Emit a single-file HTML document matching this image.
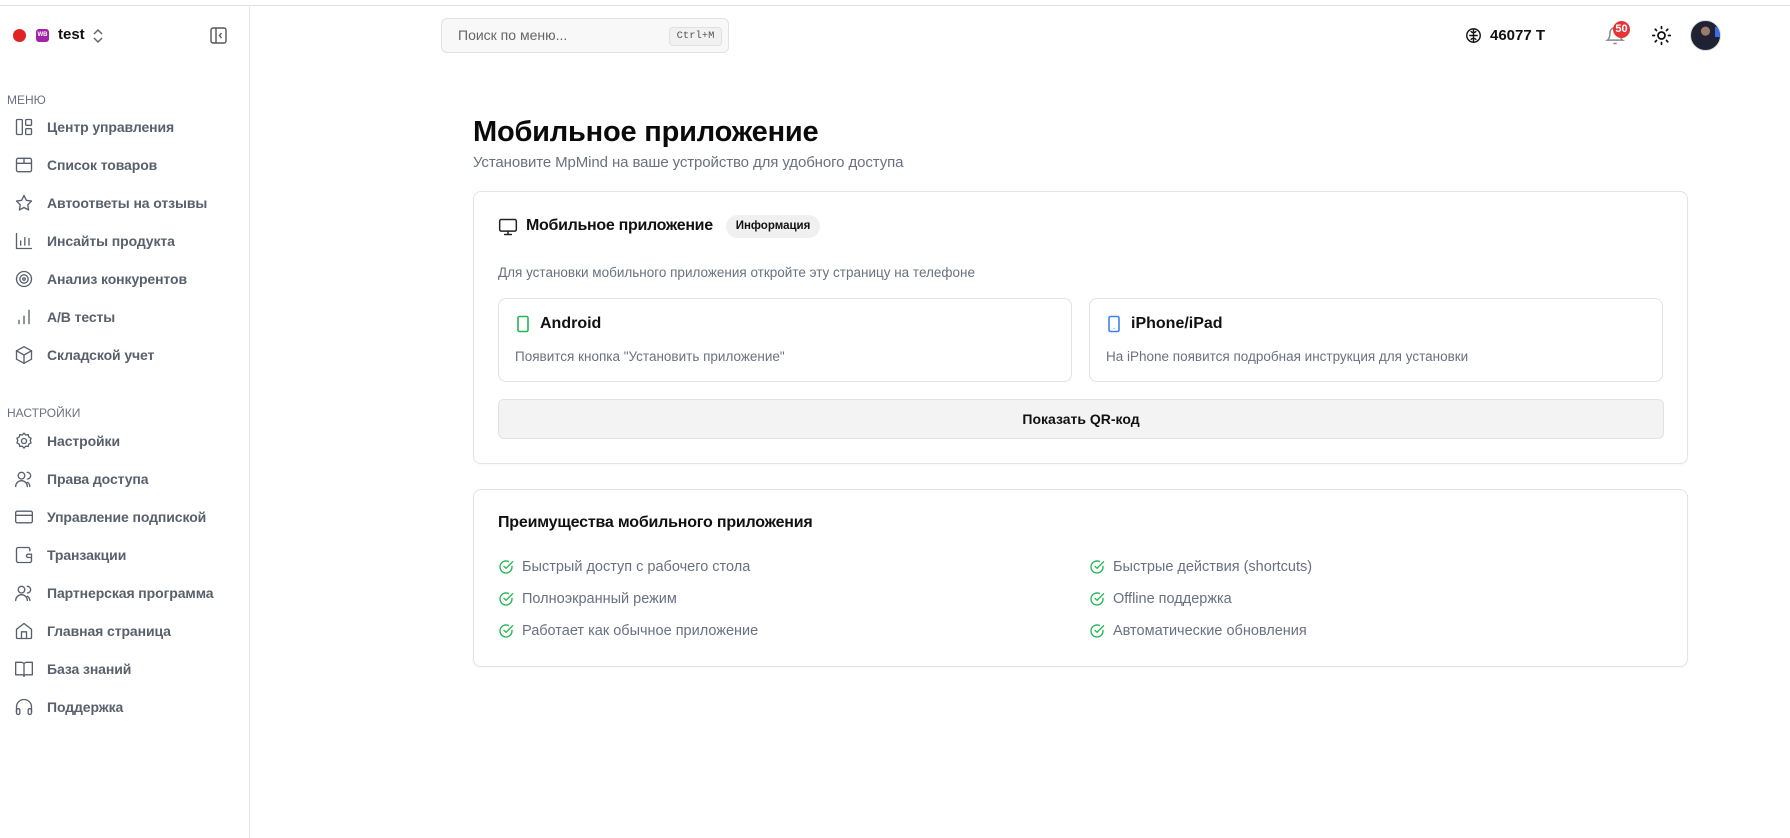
<!DOCTYPE html>
<html><head><meta charset="utf-8"><style>
*{box-sizing:border-box;margin:0;padding:0}
body{width:1790px;height:838px;overflow:hidden;background:#fff;font-family:"Liberation Sans","Noto Sans CJK SC",sans-serif;color:#111;position:relative}
.topline{position:absolute;left:0;top:5px;width:1790px;height:1px;background:#e2e2e2}
.side{position:absolute;left:0;top:5px;width:250px;height:833px;border-right:1px solid #e6e6e6}
.abs{position:absolute}
.sec{position:absolute;left:7px;font-size:12px;color:#6b7080}
.it{position:absolute;left:14px;height:24px;display:flex;align-items:center;font-size:14px;font-weight:600;color:#5a5f6c;letter-spacing:-0.1px}
.it svg{width:20px;height:20px;margin-right:13px;stroke:#5a5f6c;fill:none;stroke-width:1.6;stroke-linecap:round;stroke-linejoin:round}
.card{position:absolute;left:473px;width:1215px;border:1px solid #e3e3e3;border-radius:8px;box-shadow:0 1px 2px rgba(0,0,0,.04)}
.box{position:absolute;top:298px;width:574px;height:84px;border:1px solid #e3e3e3;border-radius:8px}
.box .h{position:absolute;left:16px;top:16px;font-size:16px;font-weight:600;display:flex;align-items:center}
.box .s{position:absolute;left:16px;top:50px;font-size:13.5px;color:#6b7080}
.li{position:absolute;display:flex;align-items:center;font-size:14.5px;color:#6b7080}
.li svg{width:16px;height:16px;margin-right:8px;stroke:#22b455;fill:none;stroke-width:2;stroke-linecap:round;stroke-linejoin:round}
</style></head><body>
<div class="topline"></div>
<div class="side"></div>
<div class="abs" style="left:13px;top:29px;width:13px;height:13px;border-radius:50%;background:#e02424"></div>
<div class="abs" style="left:36px;top:29px;width:13px;height:13px;border-radius:3px;background:#a322a8;color:#fff;font-size:6px;line-height:13px;text-align:center;font-weight:700">WB</div>
<div class="abs" style="left:58px;top:26px;font-size:15px;font-weight:700">test</div>
<svg class="abs" style="left:91px;top:27px" width="14" height="18" viewBox="0 0 14 18" fill="none" stroke="#666" stroke-width="1.5"><path d="M3 7l4-4 4 4M3 11l4 4 4-4"/></svg>
<svg class="abs" style="left:210px;top:27px" width="17" height="17" viewBox="0 0 17 17" fill="none" stroke="#555" stroke-width="1.4"><rect x="1" y="1" width="15" height="15" rx="2"/><path d="M6 1v15M11.5 6l-2 2.5 2 2.5"/></svg>

<div class="sec" style="top:93px">МЕНЮ</div>
<div class="it" style="top:115px"><svg viewBox="0 0 24 24"><rect x="3" y="3" width="7" height="18" rx="1"/><rect x="14" y="3" width="7" height="7" rx="1"/><rect x="14" y="14" width="7" height="7" rx="1"/></svg>Центр управления</div>
<div class="it" style="top:153px"><svg viewBox="0 0 24 24"><rect x="3" y="4" width="18" height="16" rx="2"/><path d="M3 10h18M12 4v6"/></svg>Список товаров</div>
<div class="it" style="top:191px"><svg viewBox="0 0 24 24"><path d="M12 3l2.8 5.8 6.2.9-4.5 4.4 1 6.2L12 17.4 6.5 20.3l1-6.2L3 9.7l6.2-.9z"/></svg>Автоответы на отзывы</div>
<div class="it" style="top:229px"><svg viewBox="0 0 24 24"><path d="M3 3v18h18M8 17v-5M13 17V8M18 17v-8"/></svg>Инсайты продукта</div>
<div class="it" style="top:267px"><svg viewBox="0 0 24 24"><circle cx="12" cy="12" r="9"/><circle cx="12" cy="12" r="5"/><circle cx="12" cy="12" r="1.5"/></svg>Анализ конкурентов</div>
<div class="it" style="top:305px"><svg viewBox="0 0 24 24"><path d="M6 20v-4M12 20v-9M18 20V4"/></svg>A/B тесты</div>
<div class="it" style="top:343px"><svg viewBox="0 0 24 24"><path d="M12 2l9 5v10l-9 5-9-5V7z"/><path d="M3 7l9 5 9-5M12 12v10"/></svg>Складской учет</div>

<div class="sec" style="top:406px">НАСТРОЙКИ</div>
<div class="it" style="top:429px"><svg viewBox="0 0 24 24"><circle cx="12" cy="12" r="3"/><path d="M12 2.5l2 2.3 3-.4.8 2.9 2.7 1.4-1 2.8 1 2.8-2.7 1.4-.8 2.9-3-.4-2 2.3-2-2.3-3 .4-.8-2.9-2.7-1.4 1-2.8-1-2.8 2.7-1.4.8-2.9 3 .4z"/></svg>Настройки</div>
<div class="it" style="top:467px"><svg viewBox="0 0 24 24"><circle cx="9" cy="8" r="4"/><path d="M2 21a7 7 0 0114 0M16 4a4 4 0 010 8M19 21a6 6 0 00-3-5"/></svg>Права доступа</div>
<div class="it" style="top:505px"><svg viewBox="0 0 24 24"><rect x="2" y="5" width="20" height="14" rx="2"/><path d="M2 10h20"/></svg>Управление подпиской</div>
<div class="it" style="top:543px"><svg viewBox="0 0 24 24"><path d="M19 7V5a2 2 0 00-2-2H5a2 2 0 00-2 2v14a2 2 0 002 2h14a2 2 0 002-2v-3"/><path d="M21 11h-4a2 2 0 000 4h4z"/></svg>Транзакции</div>
<div class="it" style="top:581px"><svg viewBox="0 0 24 24"><circle cx="9" cy="8" r="4"/><path d="M2 21a7 7 0 0114 0M16 4a4 4 0 010 8M19 21a6 6 0 00-3-5"/></svg>Партнерская программа</div>
<div class="it" style="top:619px"><svg viewBox="0 0 24 24"><path d="M3 10l9-7 9 7v10a1 1 0 01-1 1H4a1 1 0 01-1-1z"/><path d="M9 21v-8h6v8"/></svg>Главная страница</div>
<div class="it" style="top:657px"><svg viewBox="0 0 24 24"><path d="M2 4h7a3 3 0 013 3v14a2 2 0 00-2-2H2zM22 4h-7a3 3 0 00-3 3v14a2 2 0 012-2h8z"/></svg>База знаний</div>
<div class="it" style="top:695px"><svg viewBox="0 0 24 24"><path d="M3 18v-6a9 9 0 0118 0v6"/><rect x="3" y="14" width="4" height="7" rx="2"/><rect x="17" y="14" width="4" height="7" rx="2"/></svg>Поддержка</div>

<div class="abs" style="left:441px;top:18px;width:288px;height:35px;border:1px solid #e2e2e2;border-radius:6px;background:#f8f8f8"></div>
<div class="abs" style="left:458px;top:27px;font-size:14px;color:#666">Поиск по меню...</div>
<div class="abs" style="left:669px;top:27px;width:53px;height:19px;border:1px solid #e0e0e0;border-radius:4px;background:#f1f1f1;font-family:'Liberation Mono',monospace;font-size:10.5px;color:#555;text-align:center;line-height:17px">Ctrl+M</div>

<svg class="abs" style="left:1465px;top:27px" width="17" height="17" viewBox="0 0 24 24" fill="none" stroke="#111" stroke-width="2"><circle cx="12" cy="12" r="9.5"/><path d="M12 3v18M12 8c-2 0-3-1-4-2M12 12H6M12 16c-2 0-3 1-4 2M12 8c2 0 3-1 4-2M12 12h6M12 16c2 0 3 1 4 2"/></svg>
<div class="abs" style="left:1490px;top:27px;font-size:15px;font-weight:700">46077 T</div>
<svg class="abs" style="left:1605px;top:26px" width="20" height="20" viewBox="0 0 24 24" fill="none" stroke="#888" stroke-width="1.8"><path d="M6 8a6 6 0 0112 0c0 7 3 9 3 9H3s3-2 3-9M10 21h4"/></svg>
<div class="abs" style="left:1613px;top:21px;width:17px;height:17px;border-radius:50%;background:#e53535;color:#fff;font-size:11px;font-weight:700;text-align:center;line-height:17px">50</div>
<svg class="abs" style="left:1651px;top:25px" width="21" height="21" viewBox="0 0 24 24" fill="none" stroke="#111" stroke-width="2" stroke-linecap="round"><circle cx="12" cy="12" r="4"/><path d="M12 2v2M12 20v2M4.9 4.9l1.4 1.4M17.7 17.7l1.4 1.4M2 12h2M20 12h2M4.9 19.1l1.4-1.4M17.7 6.3l1.4-1.4"/></svg>
<div class="abs" style="left:1690px;top:20px;width:31px;height:31px;border-radius:50%;background:radial-gradient(circle at 50% 35%,#9a7a6a 0 18%,#1e2233 20%);border:1px solid #ddd;overflow:hidden"><div style="position:absolute;right:0;top:6px;width:5px;height:10px;background:#3a6ee8"></div></div>

<div class="abs" style="left:473px;top:116px;font-size:29px;font-weight:700;color:#0a0a0a;letter-spacing:-0.2px">Мобильное приложение</div>
<div class="abs" style="left:473px;top:154px;font-size:15px;color:#6b7080;letter-spacing:-0.1px">Установите MpMind на ваше устройство для удобного доступа</div>

<div class="card" style="top:191px;height:273px"></div>
<svg class="abs" style="left:498px;top:217px" width="20" height="20" viewBox="0 0 24 24" fill="none" stroke="#222" stroke-width="1.8" stroke-linecap="round"><rect x="2" y="3" width="20" height="14" rx="2"/><path d="M8 21h8M12 17v4"/></svg>
<div class="abs" style="left:526px;top:217px;font-size:16px;font-weight:600;letter-spacing:-0.3px">Мобильное приложение</div>
<div class="abs" style="left:726px;top:215px;width:94px;height:23px;border-radius:12px;background:#f0f0f0;font-size:11.5px;font-weight:600;text-align:center;line-height:23px">Информация</div>
<div class="abs" style="left:498px;top:265px;font-size:13.5px;color:#6b7080">Для установки мобильного приложения откройте эту страницу на телефоне</div>

<div class="box" style="left:498px"><div class="h"><svg width="16" height="18" viewBox="0 0 16 18" fill="none" stroke="#22b455" stroke-width="1.6" style="margin-right:9px"><rect x="3" y="1.5" width="10" height="15" rx="1.5"/></svg>Android</div><div class="s">Появится кнопка "Установить приложение"</div></div>
<div class="box" style="left:1089px"><div class="h"><svg width="16" height="18" viewBox="0 0 16 18" fill="none" stroke="#3b82f6" stroke-width="1.6" style="margin-right:9px"><rect x="3" y="1.5" width="10" height="15" rx="1.5"/><path d="M8 13.5v.5"/></svg>iPhone/iPad</div><div class="s">На iPhone появится подробная инструкция для установки</div></div>

<div class="abs" style="left:498px;top:399px;width:1166px;height:40px;border:1px solid #e2e2e2;border-radius:6px;background:#f3f3f3;text-align:center;line-height:38px;font-size:14px;font-weight:600">Показать QR-код</div>

<div class="card" style="top:489px;height:178px"></div>
<div class="abs" style="left:498px;top:514px;font-size:16px;font-weight:600;letter-spacing:-0.2px">Преимущества мобильного приложения</div>
<svg width="0" height="0" style="position:absolute"><defs><symbol id="ck" viewBox="0 0 24 24"><path d="M21 11v1a9 9 0 11-5.3-8.2"/><path d="M9 11l3 3L22 4"/></symbol></defs></svg>
<div class="li" style="left:498px;top:559px"><svg><use href="#ck"/></svg>Быстрый доступ с рабочего стола</div>
<div class="li" style="left:498px;top:591px"><svg><use href="#ck"/></svg>Полноэкранный режим</div>
<div class="li" style="left:498px;top:623px"><svg><use href="#ck"/></svg>Работает как обычное приложение</div>
<div class="li" style="left:1089px;top:559px"><svg><use href="#ck"/></svg>Быстрые действия (shortcuts)</div>
<div class="li" style="left:1089px;top:591px"><svg><use href="#ck"/></svg>Offline поддержка</div>
<div class="li" style="left:1089px;top:623px"><svg><use href="#ck"/></svg>Автоматические обновления</div>
</body></html>
